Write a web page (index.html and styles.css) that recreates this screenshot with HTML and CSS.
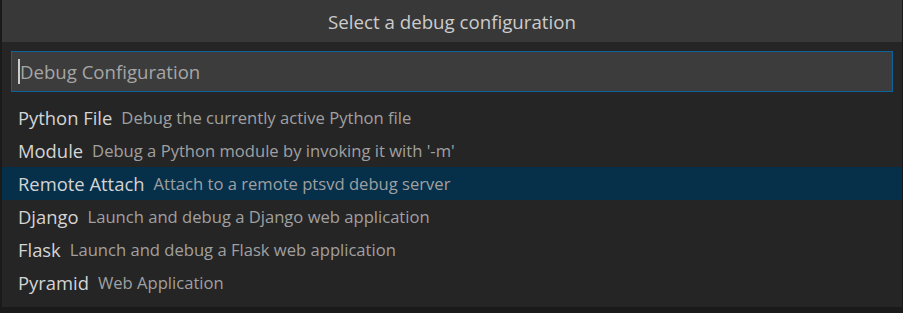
FILE: index.html
```html
<!DOCTYPE html>
<html lang="en">
<head>
    <meta charset="UTF-8">
    <title>Select a debug configuration</title>
    <link rel="stylesheet" href="styles.css">
</head>
<body>
    <div class="quick-pick">
        <div class="title">Select a debug configuration</div>
        <div class="input-wrap">
            <div class="input">
                <span class="cursor"></span>
                <span class="placeholder">Debug Configuration</span>
            </div>
        </div>
        <ul class="list">
            <li class="item"><span class="label">Python File</span><span class="desc">Debug the currently active Python file</span></li>
            <li class="item"><span class="label">Module</span><span class="desc">Debug a Python module by invoking it with '-m'</span></li>
            <li class="item selected"><span class="label">Remote Attach</span><span class="desc">Attach to a remote ptsvd debug server</span></li>
            <li class="item"><span class="label">Django</span><span class="desc">Launch and debug a Django web application</span></li>
            <li class="item"><span class="label">Flask</span><span class="desc">Launch and debug a Flask web application</span></li>
            <li class="item"><span class="label">Pyramid</span><span class="desc">Web Application</span></li>
        </ul>
    </div>
</body>
</html>
```

FILE: styles.css
```css
body {
    margin: 0;
    background-color: #1a1a1a;
    font-family: "Open Sans", "Noto Sans", sans-serif;
    height: 313px;
    overflow: hidden;
}
.quick-pick {
    margin: 0 1px 0 2px;
    height: 307px;
    background-color: #252526;
    color: #cccccc;
}
.title {
    height: 42px;
    background-color: #383838;
    text-align: center;
    font-size: 18.7px;
    line-height: 44px;
}
.input-wrap {
    padding: 9px 9px 0 9px;
}
.input {
    height: 39px;
    border: 1px solid #0e639c;
    background-color: #3c3c3c;
    display: flex;
    align-items: center;
    padding-left: 6px;
}
.cursor {
    width: 2px;
    height: 25px;
    background-color: #cccccc;
}
.placeholder {
    color: #a6a6a6;
    font-size: 18.6px;
}
.list {
    list-style: none;
    margin: 9px 0 0 0;
    padding: 0;
}
.item {
    height: 33px;
    display: flex;
    align-items: center;
    gap: 9px;
    padding-left: 16px;
}
.item.selected {
    background-color: #062f4a;
}
.label {
    font-size: 18.4px;
    color: #d4d4d4;
}
.desc {
    font-size: 16.6px;
    color: #a0a0a0;
}
```
